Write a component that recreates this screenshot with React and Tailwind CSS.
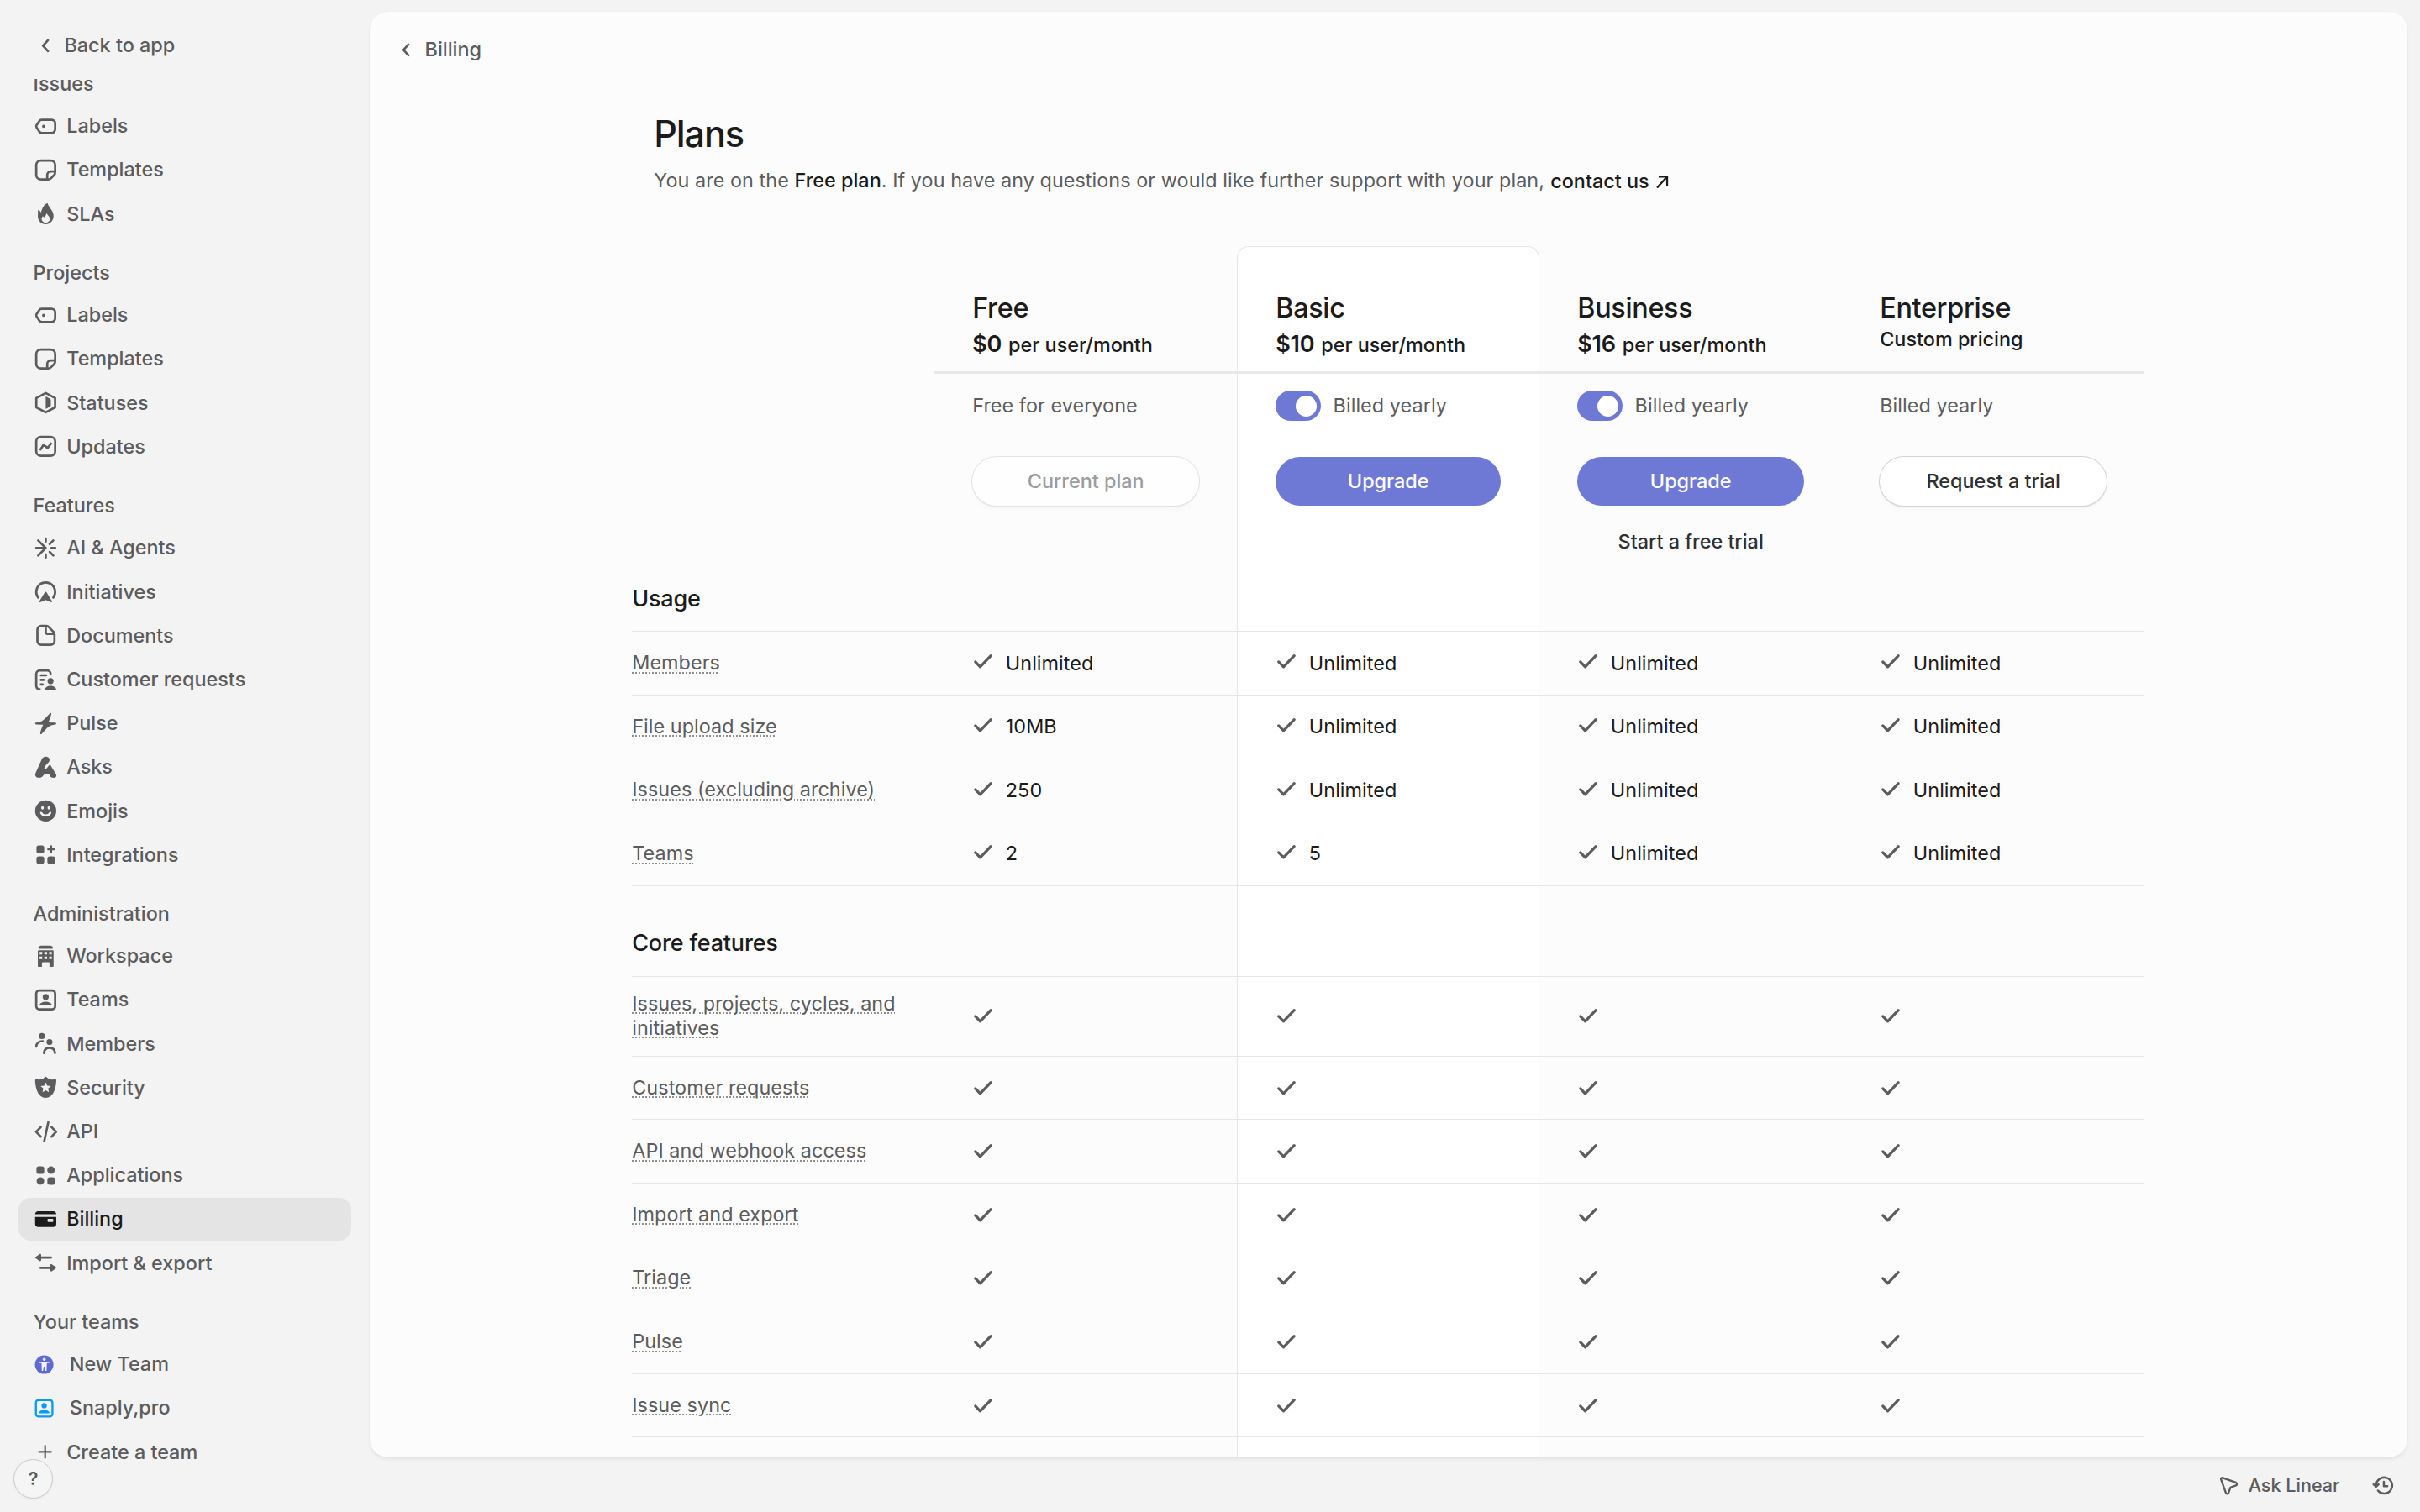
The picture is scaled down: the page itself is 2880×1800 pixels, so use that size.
import React from 'react';
import clsx from 'clsx';

function Icon({ size = 'size-4', className, children }) {
  return (
    <svg viewBox="0 0 16 16" fill="none" className={clsx('shrink-0', size, className)}>
      {children}
    </svg>
  );
}

const line = { stroke: 'currentColor', strokeWidth: 1.5, strokeLinecap: 'round', strokeLinejoin: 'round' };

const icons = {
  label: (
    <>
      <path {...line} d="M5.300 3.650h6.600a2.350 2.350 0 0 1 2.350 2.350v4a2.350 2.350 0 0 1-2.350 2.350H5.300c-.6 0-1.200-.3-1.500-.8L1.950 8.800c-.3-.5-.3-1.100 0-1.600L3.800 4.450c.3-.5.900-.8 1.500-.8Z" />
      <circle cx="6.600" cy="8" r="1" fill="currentColor" />
    </>
  ),
  template: (
    <>
      <path {...line} d="M4.750 1.750h6.500a3 3 0 0 1 3 3v4.900c0 .66-.26 1.300-.73 1.770l-2.100 2.100c-.47.470-1.100.730-1.770.730h-4.900a3 3 0 0 1-3-3v-6.500a3 3 0 0 1 3-3Z" />
      <path {...line} d="M9 14v-2.800A2.200 2.200 0 0 1 11.200 9H14" />
    </>
  ),
  flame: (
    <path
      fill="currentColor"
      fillRule="evenodd"
      d="M9.300 1c-.2 2.100 3.900 4.600 3.900 8.500 0 3.100-2.200 5.500-5.200 5.500s-5.200-2.200-5.200-5.300c0-1.600.1-2.900.1-4.200 1.100.2 1.700.9 1.900 1.800C5.800 4.700 6.500 1.900 9.300 1ZM8.500 7.700c-.2 1.200-.8 2-1.500 2.700-.3-.4-.6-.6-1-.7-.5.700-.7 1.300-.7 2 0 1.300 1.200 2.200 2.700 2.200s2.700-1 2.700-2.400c0-1.500-1.300-2.500-2.200-3.800Z"
    />
  ),
  status: (
    <>
      <path {...line} d="M8 1.600 14.200 4.900v6.200L8 14.400 1.800 11.100V4.900L8 1.600Z" />
      <path fill="currentColor" d="M8 4.200c0-.2.2-.3.400-.2l2.500 1.400c.3.200.5.500.5.800v3.600c0 .3-.2.600-.5.800L8.400 12c-.2.100-.4 0-.4-.2V4.200Z" />
    </>
  ),
  update: (
    <>
      <rect {...line} x="1.750" y="1.750" width="12.500" height="12.500" rx="3" />
      <path {...line} d="m4.600 10 2-3.100 2.600 2.200 2.300-3" />
    </>
  ),
  agents: (
    <path {...line} d="M8 1.700v2M8 12.300v2M1.750 8H8M11.800 8h2.500M3 3l5 5-5 5M13 3l-2.400 2.400M13 13l-2.400-2.400" />
  ),
  initiative: (
    <>
      <path {...line} d="M3 11.900a6.250 6.250 0 1 1 10 0" />
      <path fill="currentColor" d="M7.400 8.500c.2-.5 1-.5 1.200 0l3.500 5.600c.3.600-.2 1.100-.8.800L8.300 13.600a.8.8 0 0 0-.6 0L4.700 14.900c-.6.3-1.100-.2-.8-.8l3.500-5.600Z" />
    </>
  ),
  document: (
    <>
      <path {...line} d="M5 1.750h3.400c.6 0 1.200.2 1.600.7l3.100 3.200c.5.400.7 1 .7 1.600v4.500a2.500 2.500 0 0 1-2.500 2.500H5a2.500 2.500 0 0 1-2.500-2.500v-7.500A2.500 2.500 0 0 1 5 1.750Z" />
      <path {...line} d="M8 2.200v3.500c0 .7.600 1.300 1.300 1.300h4" />
    </>
  ),
  request: (
    <>
      <path {...line} d="M4 14.250a2.250 2.250 0 0 1-2.250-2.250V4A2.250 2.250 0 0 1 4 1.750h5A2.250 2.250 0 0 1 11.250 4M4.800 5h3.400M4.800 8h1.800M4.800 11h1.200" />
      <circle cx="11.200" cy="8.800" r="2" fill="currentColor" />
      <path fill="currentColor" d="M11.200 12c2 0 3.600 1.100 3.800 2.400.1.300-.2.600-.5.600H7.900c-.3 0-.6-.3-.5-.6.200-1.300 1.800-2.400 3.800-2.400Z" />
    </>
  ),
  pulse: (
    <path
      fill="currentColor"
      d="M10.800 1.200c.4-.4 1.100-.1.900.5C11.200 3.600 10.800 5 9.700 7.200l4.700.2c.8.100.8 1.100.1 1.200-3 .4-4.400 1-5.900 2.700l-3.300 3.500c-.4.400-1.100.1-.9-.5.400-1.800.9-3.200 1.900-5.500l-4.700-.2c-.8-.1-.8-1.100-.1-1.200 3-.4 4.500-1.100 6.100-2.800l3.200-3.400Z"
    />
  ),
  asks: (
    <path
      fill="currentColor"
      d="M8.100 1c1.500 0 2.800 1.200 2.400 2.600-.2.800-.8 1.300-1.500 2.100-1 1-1.600 1.800-1.900 3.100-.1.500.5.900.9.500.6-.5 1.100-1 1.700-1.900.4-.6.600-.9 1-.9.500 0 .7.400.9.800l3.200 5.200c.7 1.200 0 2.500-1.300 2.500-1.500 0-2.400-.3-2.700-1.500-.2-.7-.5-1-1.100-1H8.200c-.8 0-1.400.3-1.800 1C5.700 14.600 5 15 3.500 15 1.600 15 .7 13.600 1.200 12.100L5.300 2.900C5.800 1.700 6.800 1 8.100 1Z"
    />
  ),
  emoji: (
    <>
      <circle cx="8" cy="8" r="7" fill="currentColor" />
      <ellipse cx="5.900" cy="6" rx=".9" ry="1.100" fill="#f3f3f3" />
      <ellipse cx="10.100" cy="6" rx=".9" ry="1.100" fill="#f3f3f3" />
      <path d="M5 9.300c.6 1.200 1.700 1.700 3 1.700s2.400-.5 3-1.700" stroke="#f3f3f3" strokeWidth="1.400" strokeLinecap="round" />
    </>
  ),
  integrations: (
    <>
      <rect x="1.900" y="2" width="5.100" height="5" rx="1.500" fill="currentColor" />
      <rect x="1.900" y="9.100" width="5.100" height="5" rx="1.500" fill="currentColor" />
      <rect x="9.100" y="9.100" width="5.100" height="5" rx="1.500" fill="currentColor" />
      <path {...line} strokeWidth="1.300" d="M11.600 2.500v4M9.600 4.500h4" />
    </>
  ),
  workspace: (
    <>
      <path fill="currentColor" d="M5 1h6c.9 0 1.700.6 1.900 1.400.1.300-.1.600-.5.600H3.600c-.4 0-.6-.3-.5-.6C3.300 1.600 4.100 1 5 1Z" />
      <path
        fill="currentColor"
        fillRule="evenodd"
        d="M2.800 4.500c0-.3.200-.5.500-.5h9.400c.3 0 .5.200.5.500v10c0 .3-.2.500-.5.500h-2.200v-2.500c0-.3-.2-.5-.5-.5H6c-.3 0-.5.200-.5.500V15H3.300c-.3 0-.5-.2-.5-.5v-10ZM4 5.200v1.600h1.700V5.200H4Zm3.100 0v1.600h1.800V5.200H7.100Zm3.200 0v1.600H12V5.200h-1.700ZM4 8.200v1.600h1.700V8.200H4Zm3.100 0v1.600h1.800V8.200H7.100Zm3.200 0v1.600H12V8.200h-1.700Z"
      />
    </>
  ),
  team: (
    <>
      <rect {...line} x="1.750" y="1.750" width="12.500" height="12.500" rx="2" />
      <circle cx="8" cy="6" r="2" fill="currentColor" />
      <path fill="currentColor" d="M8 9.200c1.900 0 3.500.7 4 1.800.2.400-.1.700-.5.700h-7c-.4 0-.7-.3-.5-.7.500-1.100 2.100-1.800 4-1.800Z" />
    </>
  ),
  members: (
    <>
      <circle cx="5.500" cy="3" r="2" fill="currentColor" />
      <circle cx="10.500" cy="7" r="2" fill="currentColor" />
      <path {...line} d="M1.750 10c.2-2.300 1.900-3.600 4.300-3.600M6.800 14.200c.3-2.300 1.600-3.400 3.700-3.400s3.400 1.100 3.700 3.400" />
    </>
  ),
  security: (
    <path
      fill="currentColor"
      fillRule="evenodd"
      d="M7.300 1.400c.4-.5 1-.5 1.400 0 .9 1.200 3 1.900 5.300 1.300.6-.2 1.100.2 1 .8-.2 5.400-2 11.500-7 11.500S1.200 8.900 1 3.500c0-.6.400-1 1-.8 2.300.6 4.400-.1 5.300-1.300ZM8 4.700l-1 2.200-2.400.3 1.800 1.600-.5 2.400L8 10l2.100 1.200-.5-2.400 1.800-1.600L9 6.900 8 4.700Z"
    />
  ),
  api: <path {...line} d="M4.700 4.900 1.700 8l3 3.200M11.900 4.900l3 3.100-3 3.200M9.700 1.700 7 14.300" />,
  applications: (
    <>
      <rect x="1.900" y="2" width="5.100" height="5" rx="1.500" fill="currentColor" />
      <circle cx="11.500" cy="4.500" r="2.500" fill="currentColor" />
      <circle cx="4.500" cy="11.600" r="2.500" fill="currentColor" />
      <rect x="9.100" y="9.100" width="5.100" height="5" rx="1.500" fill="currentColor" />
    </>
  ),
  billing: (
    <>
      <path fill="currentColor" d="M3 2.800h10c1.100 0 2 .8 2 1.900H1c0-1.100.9-1.900 2-1.900Z" />
      <path
        fill="currentColor"
        fillRule="evenodd"
        d="M1 6.500h14v4.700c0 1.100-.9 2-2 2H3c-1.100 0-2-.9-2-2V6.500Zm8.700 1.300c-.3 0-.5.200-.5.500v1c0 .3.200.5.500.5h2.800c.3 0 .5-.2.500-.5v-1c0-.3-.2-.5-.5-.5H9.700Z"
      />
    </>
  ),
  transfer: (
    <>
      <path {...line} d="M4.500 4.500h7M4.500 11.300h7" />
      <path fill="currentColor" d="M1.200 4.100 4 2.200c.4-.3 1 0 1 .5v3.600c0 .5-.6.800-1 .5L1.200 4.900a.5.500 0 0 1 0-.8ZM14.800 10.900 12 9c-.4-.3-1 0-1 .5v3.600c0 .5.600.8 1 .5l2.800-1.900a.5.500 0 0 0 0-.8Z" />
    </>
  ),
  accessibility: (
    <>
      <circle cx="8" cy="8" r="7" fill="currentColor" />
      <circle cx="8" cy="4" r="1.100" fill="#f3f3f3" />
      <path d="M4.500 6.300h7" stroke="#f3f3f3" strokeWidth="1" strokeLinecap="round" />
      <path fill="#f3f3f3" d="M6 6.200h4l-.2 6.200c0 .5-.9.500-1 0L8.300 9.600h-.6l-.5 2.800c-.1.500-1 .5-1 0L6 6.200Z" />
    </>
  ),
  plus: <path {...line} strokeWidth="1.200" d="M7.600 4v8M3.600 8h8" />,
  chevron: <path {...line} d="M9.500 4.400 6.200 8l3.300 3.600" />,
};

const sections = [
  {
    title: 'Issues',
    items: [
      { icon: 'label', name: 'Labels' },
      { icon: 'template', name: 'Templates' },
      { icon: 'flame', name: 'SLAs' },
    ],
  },
  {
    title: 'Projects',
    items: [
      { icon: 'label', name: 'Labels' },
      { icon: 'template', name: 'Templates' },
      { icon: 'status', name: 'Statuses' },
      { icon: 'update', name: 'Updates' },
    ],
  },
  {
    title: 'Features',
    items: [
      { icon: 'agents', name: 'AI & Agents' },
      { icon: 'initiative', name: 'Initiatives' },
      { icon: 'document', name: 'Documents' },
      { icon: 'request', name: 'Customer requests' },
      { icon: 'pulse', name: 'Pulse' },
      { icon: 'asks', name: 'Asks' },
      { icon: 'emoji', name: 'Emojis' },
      { icon: 'integrations', name: 'Integrations' },
    ],
  },
  {
    title: 'Administration',
    items: [
      { icon: 'workspace', name: 'Workspace' },
      { icon: 'team', name: 'Teams' },
      { icon: 'members', name: 'Members' },
      { icon: 'security', name: 'Security' },
      { icon: 'api', name: 'API' },
      { icon: 'applications', name: 'Applications' },
      { icon: 'billing', name: 'Billing', active: true },
      { icon: 'transfer', name: 'Import & export' },
    ],
  },
  {
    title: 'Your teams',
    items: [
      { icon: 'accessibility', name: 'New Team', team: true, color: 'text-[#5e6ad2]' },
      { icon: 'team', name: 'Snaply,pro', team: true, color: 'text-[#069bf7]' },
      { icon: 'plus', name: 'Create a team' },
    ],
  },
];

function Sidebar() {
  return (
    <aside className="flex w-[244.400px] shrink-0 flex-col font-medium text-[#5c5c5e]">
      <div className="flex h-[52px] items-center gap-1 pt-2 pl-[22px]">
        <Icon>{icons.chevron}</Icon>
        <span className="pl-[0.500px]">Back to app</span>
      </div>
      <nav className="flex-1 overflow-hidden">
        <div className="-mt-[21.500px] px-3">
          {sections.map((section) => (
            <div key={section.title} className="pt-[11px]">
              <div className="flex h-7 items-center px-2.5">{section.title}</div>
              <div className="flex flex-col gap-px">
                {section.items.map((item) => (
                  <div
                    key={item.name}
                    className={clsx(
                      'flex h-7 items-center rounded-lg px-2.5',
                      item.team ? 'gap-2.5' : 'gap-1.5',
                      item.active && 'bg-[#e4e4e4] text-[#1b1b1b]'
                    )}
                  >
                    <Icon size={item.team ? 'size-3.5' : 'size-4'} className={item.color}>
                      {icons[item.icon]}
                    </Icon>
                    <span>{item.name}</span>
                  </div>
                ))}
              </div>
            </div>
          ))}
        </div>
      </nav>
    </aside>
  );
}

function Check() {
  return (
    <Icon className="text-[#5c5c5e]">
      <path {...line} strokeWidth="1.800" d="m2.100 8.300 3.200 3.300 7-7.300" />
    </Icon>
  );
}

function Toggle() {
  return (
    <span className="flex h-5 w-[30px] items-center justify-end rounded-full bg-[#6e79d6] pr-[3px]">
      <span className="size-3.5 rounded-full bg-white" />
    </span>
  );
}

const cell = 'w-[200px] shrink-0 pl-[25px] pr-[25px]';
const basic = 'border-x border-[#e6e6e6] bg-white';

const plans = [
  { name: 'Free', price: '$0', billing: 'Free for everyone', action: 'Current plan', kind: 'disabled' },
  { name: 'Basic', price: '$10', billing: 'Billed yearly', toggle: true, action: 'Upgrade', kind: 'primary' },
  { name: 'Business', price: '$16', billing: 'Billed yearly', toggle: true, action: 'Upgrade', kind: 'primary', trial: true },
  { name: 'Enterprise', billing: 'Billed yearly', action: 'Request a trial', kind: 'outline' },
];

function PlanHeader() {
  return (
    <>
      <div className="ml-[200px] flex h-[84.400px] border-b-2 border-[#e8e8e8] text-[#1b1b1b]">
        {plans.map((plan, i) => (
          <div key={plan.name} className={clsx(cell, i === 1 ? 'rounded-t-lg border-t pt-[28px]' : 'pt-[28.500px]', i === 1 && basic)}>
            <div className="text-[18px] leading-6 font-medium tracking-[-0.010em]">{plan.name}</div>
            {plan.price ? (
              <div className="font-medium">
                <span className="mr-px text-[15px] leading-6 font-semibold tracking-[-0.010em]">{plan.price}</span> per user/month
              </div>
            ) : (
              <div className="leading-[18px] font-medium">Custom pricing</div>
            )}
          </div>
        ))}
      </div>
      <div className="ml-[200px] flex h-[42.800px] border-b border-[#e6e6e6] tracking-[0.030px] text-[#5c5c5e]">
        {plans.map((plan, i) => (
          <div key={plan.name} className={clsx(cell, 'flex items-center gap-2', i === 1 && basic)}>
            {plan.toggle && <Toggle />}
            <span>{plan.billing}</span>
          </div>
        ))}
      </div>
      <div className="ml-[200px] flex h-[84px] font-medium">
        {plans.map((plan, i) => (
          <div key={plan.name} className={clsx(cell, 'pt-3', i === 1 && basic)}>
            <div
              className={clsx(
                'flex h-8 items-center justify-center rounded-full',
                plan.kind === 'primary' && 'bg-[#6e79d6] text-white',
                plan.kind === 'outline' && 'bg-white text-[#2f2f31] shadow-[0_0_0_0.600px_#d4d4d4,0_1px_1px_#0000001a,0_3px_6px_-2px_#00000008]',
                plan.kind === 'disabled' && 'bg-[#fefefe] text-[#9c9c9d] shadow-[0_0_0_0.600px_#e4e4e4,0_1px_1px_#00000012,0_3px_6px_-2px_#00000008]'
              )}
            >
              {plan.action}
            </div>
            {plan.trial && <div className="flex h-8 items-center justify-center pt-4 text-[#2f2f31]">Start a free trial</div>}
          </div>
        ))}
      </div>
    </>
  );
}

const groups = [
  {
    title: 'Usage',
    height: 'h-[43.800px]',
    rows: [
      { name: 'Members', values: ['Unlimited', 'Unlimited', 'Unlimited', 'Unlimited'] },
      { name: 'File upload size', values: ['10MB', 'Unlimited', 'Unlimited', 'Unlimited'] },
      { name: 'Issues (excluding archive)', values: ['250', 'Unlimited', 'Unlimited', 'Unlimited'] },
      { name: 'Teams', values: ['2', '5', 'Unlimited', 'Unlimited'] },
    ],
  },
  {
    title: 'Core features',
    height: 'h-[60px]',
    rows: [
      { name: 'Issues, projects, cycles, and initiatives', tall: true },
      { name: 'Customer requests' },
      { name: 'API and webhook access' },
      { name: 'Import and export' },
      { name: 'Triage' },
      { name: 'Pulse' },
      { name: 'Issue sync' },
    ],
  },
];

function FeatureRow({ row }) {
  return (
    <div className={clsx('flex shrink-0 border-b border-[#e6e6e6] tracking-[0.030px]', row.tall ? 'h-[52.800px]' : 'h-[42px]')}>
      <div className="flex w-[200px] items-center pr-3 leading-4 text-[#5c5c5e]">
        <span className="underline decoration-[#8f8f91] decoration-dotted decoration-1 underline-offset-[1.500px]">{row.name}</span>
      </div>
      {plans.map((plan, i) => (
        <div key={plan.name} className={clsx(cell, 'flex items-center gap-1.5 text-[#1b1b1b]', i === 1 && basic)}>
          <div className={clsx(row.values && 'pb-0.5')}>
            <Check />
          </div>
          {row.values && <span>{row.values[i]}</span>}
        </div>
      ))}
    </div>
  );
}

function GroupTitle({ group }) {
  return (
    <div className={clsx('flex shrink-0 border-b border-[#e6e6e6]', group.height)}>
      <div className="flex w-[400px] items-end pb-[11.500px] text-[15px] leading-5 font-medium tracking-[-0.100px] text-[#1b1b1b]">
        {group.title}
      </div>
      <div className={clsx('w-[200px]', basic)} />
    </div>
  );
}

function Plans() {
  return (
    <main className="flex h-[955.800px] w-[1347px] flex-col overflow-hidden rounded-xl bg-[#fcfcfc] shadow-[0_0_1px_#0000000d,0_2px_3px_-1px_#00000012]">
      <div className="flex h-[49.600px] shrink-0 items-center gap-1 pl-4 font-medium text-[#5c5c5e]">
        <Icon>{icons.chevron}</Icon>
        <span className="pl-[0.500px]">Billing</span>
      </div>
      <div className="mx-auto flex w-[1000px] flex-col">
        <div className="h-[105.400px] pt-[15.400px] pl-[14.500px]">
          <h1 className="text-[24px] leading-8 font-medium tracking-[-0.650px] text-[#1b1b1b]">Plans</h1>
          <p className="mt-1 flex items-center leading-5 tracking-[0.030px] text-[#5c5c5e]">
            <span>
              You are on the <span className="font-medium tracking-normal text-[#1b1b1b]">Free plan</span>. If you have any questions or
              would like further support with your plan,
            </span>
            <span className="ml-1 flex items-center gap-1 pt-px font-medium tracking-normal text-[#1b1b1b]">
              contact us
              <Icon size="size-[10px]">
                <path {...line} strokeWidth="2" strokeLinecap="square" strokeLinejoin="miter" d="M4.500 3h8v8.500M12 3.500 2.500 14" />
              </Icon>
            </span>
          </p>
        </div>
        <PlanHeader />
        {groups.map((group) => (
          <React.Fragment key={group.title}>
            <GroupTitle group={group} />
            {group.rows.map((row) => (
              <FeatureRow key={row.name} row={row} />
            ))}
          </React.Fragment>
        ))}
        <div className={clsx('ml-[400px] h-[42px] w-[200px] shrink-0', basic)} />
      </div>
    </main>
  );
}

function App() {
  return (
    <div className="relative flex h-[1000px] w-[1600px] overflow-hidden bg-[#f3f3f3] font-['Inter',sans-serif] text-[13px] leading-5 [zoom:1.8]">
      <Sidebar />
      <div className="flex flex-col pt-2">
        <Plans />
        <div className="flex h-9 items-center justify-end gap-[21px] pt-px pr-[7.500px] text-[12px] font-medium text-[#5c5c5e]">
          <div className="flex items-center gap-1.5">
            <Icon size="size-3.5">
              <path {...line} d="M2 3.300c-.2-.8.500-1.500 1.300-1.200l10 3.600c1 .4 1 1.700 0 2.100L9.600 9.200c-.3.100-.5.300-.6.600l-1.300 3.600c-.4 1-1.900 1-2.100-.1L2 3.300Z" />
            </Icon>
            <span>Ask Linear</span>
          </div>
          <Icon>
            <path {...line} strokeWidth="1.400" d="M3.200 7.800a5.300 5.300 0 1 1 1.200 3.600M8.300 5.500v3h2.300M1.500 7.300l1.700 1.500 1.600-1.500" />
          </Icon>
        </div>
      </div>
      <div className="absolute top-[965px] left-[9px] flex size-[26px] items-center justify-center rounded-full border border-[#c9c9c9] bg-[#f5f5f5] text-[12px] font-semibold text-[#5c5c5e] shadow-[0_1px_2px_#0000000a]">
        ?
      </div>
    </div>
  );
}

export default App;
